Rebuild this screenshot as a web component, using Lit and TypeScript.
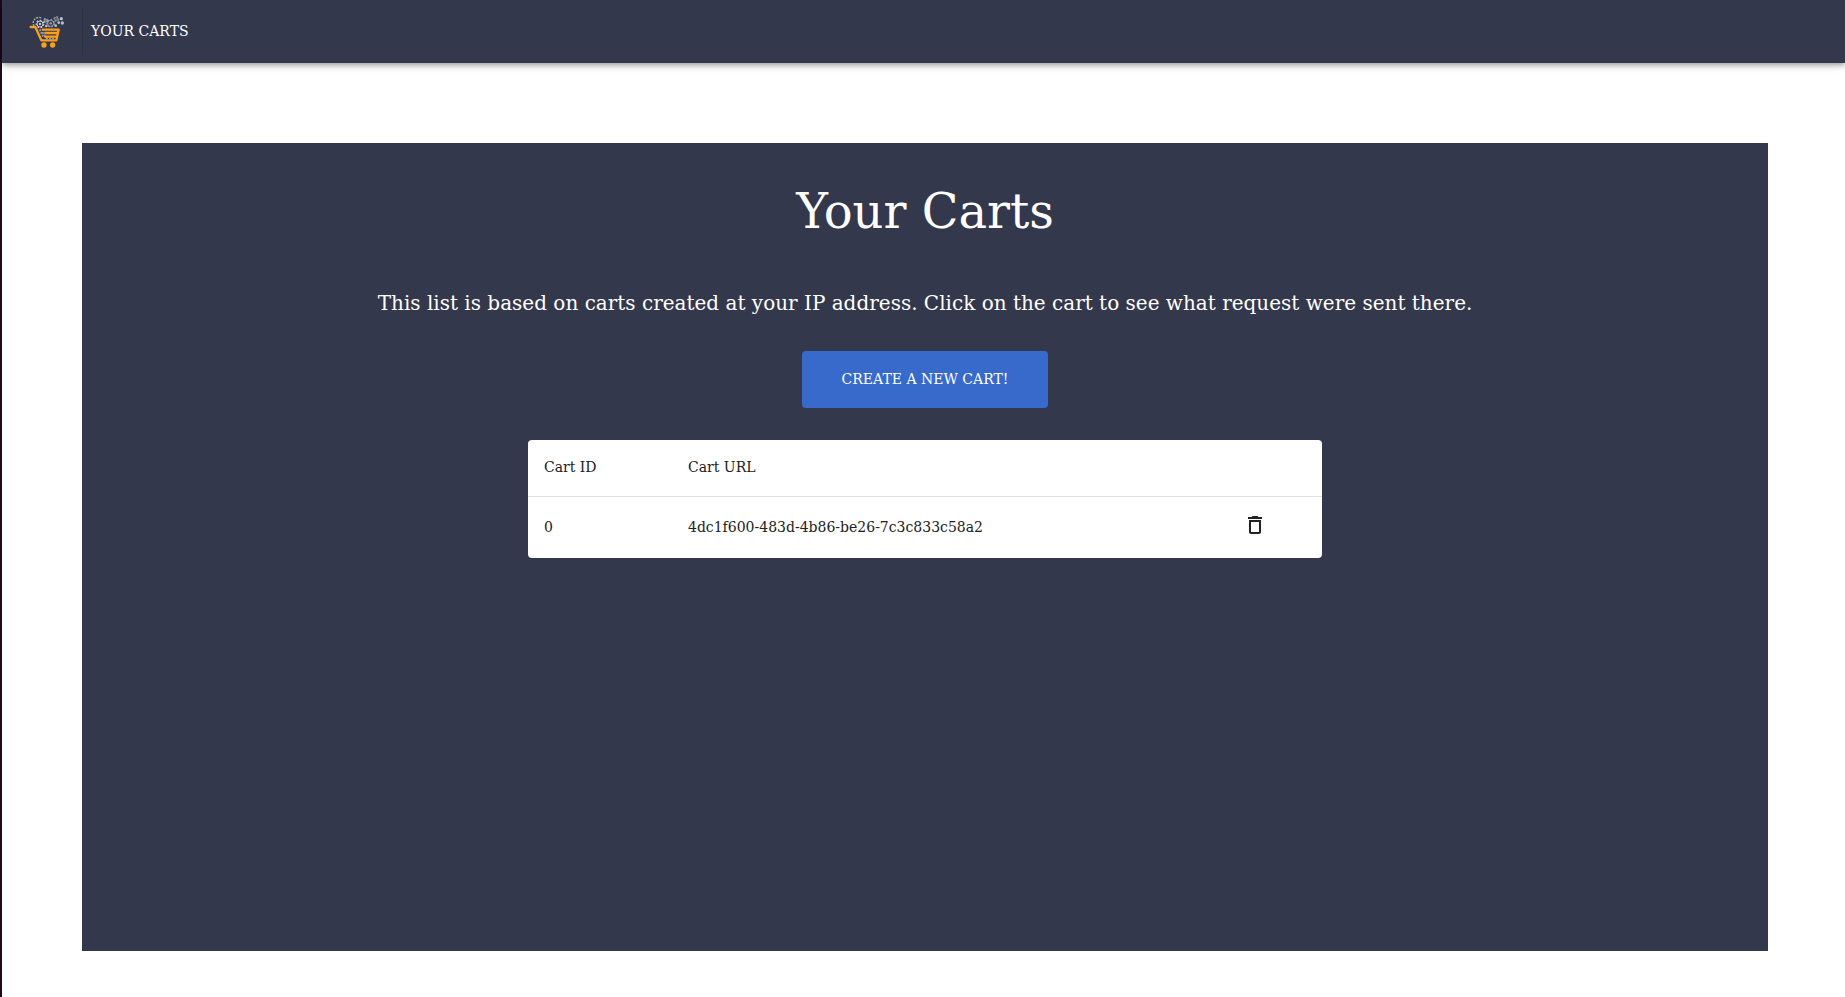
import { LitElement, html, css, svg } from "lit";
import { customElement, state } from "lit/decorators.js";

interface Cart {
  id: number;
  url: string;
}

const gear = (cx: number, cy: number, r: number, color: string) => svg`
  <circle cx=${cx} cy=${cy} r=${r} fill="none" stroke=${color} stroke-width="3"></circle>
  <circle cx=${cx} cy=${cy} r=${r + 2} fill="none" stroke=${color} stroke-width="4" stroke-dasharray="5 5"></circle>
  <circle cx=${cx} cy=${cy} r=${r * 0.4} fill=${color}></circle>`;

@customElement("app-root")
export class AppRoot extends LitElement {
  @state() private carts: Cart[] = [
    { id: 0, url: "4dc1f600-483d-4b86-be26-7c3c833c58a2" },
  ];

  static styles = css`
    :host {
      display: block;
      box-sizing: border-box;
      min-height: 100vh;
      border-left: 2px solid #1f0a1a;
      background: #fff;
      color: #212121;
      font-family: "DejaVu Serif", serif;
      font-size: 14px;
      line-height: 22px;
    }
    .bar {
      display: flex;
      align-items: center;
      box-sizing: border-box;
      height: 63px;
      padding: 0 24px;
      background: #34384c;
      box-shadow: 0 2px 4px -1px rgba(0, 0, 0, 0.2),
        0 4px 5px 0 rgba(0, 0, 0, 0.14), 0 1px 10px 0 rgba(0, 0, 0, 0.12);
    }
    .brand {
      display: flex;
      padding: 8px 16px 8px 0;
    }
    .logo {
      display: block;
      width: 40px;
      height: 32px;
    }
    .nav {
      display: flex;
      align-items: center;
      box-sizing: border-box;
      height: 47px;
      border-left: 1px solid #2e3042;
      padding: 0 0 1px 8px;
    }
    .nav a {
      color: #fff;
      text-decoration: none;
    }
    .panel {
      display: flex;
      flex-direction: column;
      align-items: center;
      box-sizing: border-box;
      min-height: calc(100vh - 189px);
      margin: 80px 77px 46px 80px;
      padding: 40px 16px;
      background: #34384c;
      color: #fff;
    }
    h1 {
      margin: 0;
      font-size: 48px;
      font-weight: 400;
      line-height: 56px;
    }
    .intro {
      margin: 48px 0 32px;
      font-size: 20px;
      line-height: 32px;
      text-align: center;
    }
    .create {
      height: 57px;
      padding: 0 40px 1px;
      border: 0;
      border-radius: 4px;
      background: #376acb;
      color: #fff;
      font: inherit;
      cursor: pointer;
    }
    .card {
      width: 100%;
      max-width: 794px;
      margin-top: 32px;
      border-radius: 4px;
      background: #fff;
      color: #212121;
      overflow: hidden;
    }
    table {
      width: 100%;
      border-collapse: separate;
      border-spacing: 0;
      table-layout: fixed;
    }
    th,
    td {
      padding: 16px 16px 18px;
      font-weight: 400;
      text-align: left;
    }
    th {
      border-bottom: 1px solid #e0e0e0;
    }
    td {
      height: 27px;
    }
    .id {
      width: 112px;
    }
    .action {
      width: 102px;
      vertical-align: top;
    }
    td a {
      color: inherit;
      text-decoration: none;
    }
    .delete {
      display: block;
      margin: 0 auto;
      padding: 0;
      border: 0;
      background: none;
      color: #212121;
      cursor: pointer;
    }
    .delete svg {
      display: block;
      width: 24px;
      height: 24px;
      fill: currentColor;
    }
  `;

  private remove(id: number) {
    this.carts = this.carts.filter((c) => c.id !== id);
  }

  private create() {
    const id = this.carts.length;
    this.carts = [...this.carts, { id, url: crypto.randomUUID() }];
  }

  private logo() {
    return html`<svg class="logo" viewBox="0 0 120 96" aria-hidden="true">
      <path d="M24 30a17 17 0 0 1 22-24" fill="none" stroke="#a5a9b6" stroke-width="4" stroke-dasharray="6 3"></path>
      ${gear(42, 24, 9, "#c4c7d0")}
      ${gear(74, 22, 9, "#9a9eac")}
      ${gear(91, 9, 5, "#8b8fa0")}
      ${gear(59, 14, 4, "#a5a9b6")}
      <g fill="#b9bdc8">
        <circle cx="61" cy="30" r="4"></circle>
        <circle cx="106" cy="8" r="5"></circle>
        <circle cx="109" cy="21" r="5"></circle>
        <circle cx="98" cy="20" r="4"></circle>
        <circle cx="89" cy="29" r="4"></circle>
      </g>
      <g fill="none" stroke="#9a9eac" stroke-width="5" stroke-dasharray="6 3">
        <path d="M41 40l11 24M50 48l10 18M60 67h26"></path>
      </g>
      <path d="M14 33h14l18 40h45l7-32H50M95 51H58M91 62H58" fill="none" stroke="#fb9f1d"
        stroke-width="7" stroke-linecap="round" stroke-linejoin="round"></path>
      <circle cx="54" cy="87" r="8" fill="#fb9f1d"></circle>
      <circle cx="80" cy="87" r="8" fill="#fb9f1d"></circle>
    </svg>`;
  }

  render() {
    return html`
      <header class="bar">
        <a class="brand" href="#" aria-label="Home">${this.logo()}</a>
        <nav class="nav"><a href="#carts">YOUR CARTS</a></nav>
      </header>
      <main class="panel">
        <h1>Your Carts</h1>
        <p class="intro">
          This list is based on carts created at your IP address. Click on the
          cart to see what request were sent there.
        </p>
        <button class="create" @click=${this.create}>CREATE A NEW CART!</button>
        <div class="card">
          <table>
            <thead>
              <tr>
                <th class="id" scope="col">Cart ID</th>
                <th scope="col">Cart URL</th>
                <th class="action" scope="col"></th>
              </tr>
            </thead>
            <tbody>
              ${this.carts.map(
                (c) => html`<tr>
                  <td>${c.id}</td>
                  <td><a href="#${c.url}">${c.url}</a></td>
                  <td class="action">
                    <button class="delete" aria-label="Delete cart ${c.id}" @click=${() => this.remove(c.id)}>
                      <svg viewBox="0 0 24 24" aria-hidden="true">
                        <path d="M6 19c0 1.100.9 2 2 2h8c1.100 0 2-.9 2-2V7H6v12zM8 9h8v10H8V9zm7.500-5l-1-1h-5l-1 1H5v2h14V4z"></path>
                      </svg>
                    </button>
                  </td>
                </tr>`
              )}
            </tbody>
          </table>
        </div>
      </main>
    `;
  }
}
